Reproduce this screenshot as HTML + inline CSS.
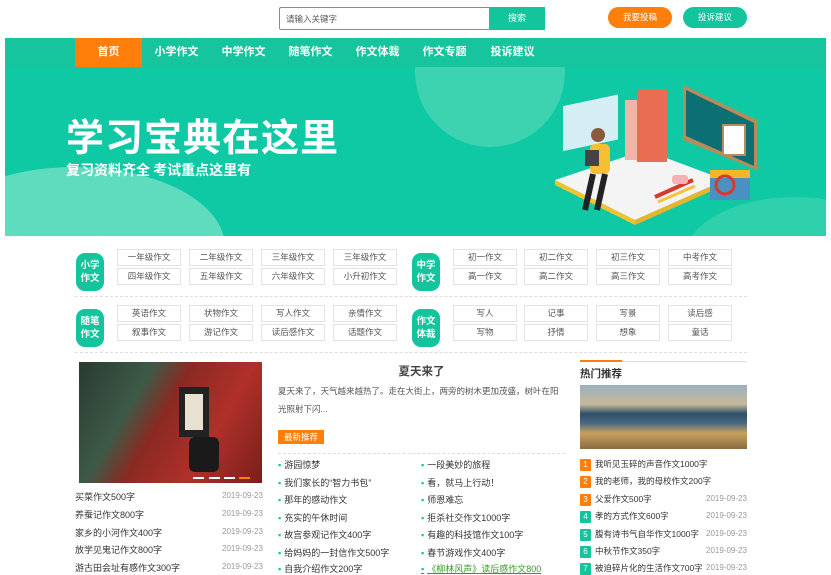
<!DOCTYPE html>
<html><head><meta charset="utf-8"><style>
*{margin:0;padding:0;box-sizing:border-box}
body{width:831px;height:572px;overflow:hidden;background:#fff;font-family:"Liberation Sans","Noto Sans CJK SC",sans-serif;font-size:9px;color:#333;position:relative}
.a{position:absolute}
.nav span{position:absolute;top:0;height:29px;line-height:29px;color:#fff;font-size:11px;font-weight:bold;text-align:center;width:67px}
.cell{position:absolute;width:64px;height:17px;border:1px solid #e3e3e3;text-align:center;line-height:15px;font-size:8.5px;color:#555}
.badge{position:absolute;width:28px;height:38px;border-radius:9px;background:#13c49c;color:#fff;font-weight:bold;font-size:9.5px;text-align:center;line-height:13px;padding-top:6px}
.li{position:absolute;font-size:9px;color:#333;white-space:nowrap}
.r{font-size:8.5px}
.d{position:absolute;font-size:8px;color:#999;background:#fff;padding-left:2px}
.dot{color:#13c49c;margin-right:3px}
.n{display:inline-block;width:11px;height:12px;color:#fff;font-size:8px;text-align:center;line-height:12px;margin-right:4px;border-radius:1px}
</style></head><body>
<div class="a" style="left:279px;top:7px;width:266px;height:23px;border:1px solid #13c49c;border-radius:2px"></div>
<div class="a" style="left:286px;top:13px;font-size:8.5px;color:#555">请输入关键字</div>
<div class="a" style="left:489px;top:7px;width:56px;height:23px;background:#13c49c;color:#fff;text-align:center;line-height:23px;font-size:9px">搜索</div>
<div class="a" style="left:608px;top:7px;width:64px;height:21px;border-radius:11px;background:#ff7f0a;color:#fff;text-align:center;line-height:21px;font-size:8.5px">我要投稿</div>
<div class="a" style="left:683px;top:7px;width:64px;height:21px;border-radius:11px;background:#13c49c;color:#fff;text-align:center;line-height:21px;font-size:8.5px">投诉建议</div>
<div class="a nav" style="left:5px;top:38px;width:821px;height:29px;background:#16c49e">
<span style="left:70px;background:#ff7f0a">首页</span>
<span style="left:138px">小学作文</span><span style="left:205px">中学作文</span><span style="left:272px">随笔作文</span><span style="left:339px">作文体裁</span><span style="left:406px">作文专题</span><span style="left:474px">投诉建议</span>
</div>
<div class="a" style="left:5px;top:67px;width:821px;height:169px;background:#0fc9a5;overflow:hidden">
<div class="a" style="left:410px;top:-70px;width:150px;height:150px;border-radius:50%;background:#3dd3b1"></div>
<div class="a" style="left:-80px;top:100px;width:300px;height:160px;border-radius:50%;background:#5fdcbd"></div>
<div class="a" style="left:680px;top:130px;width:220px;height:120px;border-radius:50%;background:#2fd0ac"></div>
<div class="a" style="left:61px;top:40px;font-size:38px;font-weight:bold;color:#fff;letter-spacing:1px;font-family:'Noto Sans CJK SC',sans-serif">学习宝典在这里</div>
<div class="a" style="left:61px;top:93px;font-size:14px;font-weight:bold;color:#fff;font-family:'Noto Sans CJK SC',sans-serif">复习资料齐全 考试重点这里有</div>
<svg class="a" style="left:540px;top:3px" width="220" height="160" viewBox="0 0 220 160">
<polygon points="10,110 100,80 180,110 90,150" fill="#f4f4f4"/>
<polygon points="10,110 90,150 90,155 10,115" fill="#f2c230"/>
<polygon points="90,150 180,110 180,115 90,155" fill="#e8b52a"/>
<rect x="18" y="40" width="55" height="45" fill="#d5eef5" transform="skewY(-12)"/>
<rect x="80" y="30" width="30" height="60" fill="#f0b5a8"/>
<rect x="92" y="20" width="30" height="72" fill="#e86d52"/>
<polygon points="138,15 212,50 212,100 138,70" fill="#b98a5b"/>
<polygon points="141,20 209,53 209,96 141,66" fill="#0c6f73"/>
<rect x="178" y="55" width="22" height="30" fill="#fff" stroke="#b98a5b" stroke-width="2"/>
<rect x="165" y="105" width="40" height="25" fill="#4a90c0"/><rect x="165" y="100" width="40" height="8" fill="#f7b42c"/>
<circle cx="180" cy="115" r="9" fill="none" stroke="#d63a2e" stroke-width="3"/>
<path d="M110 127 L148 110" stroke="#d63a2e" stroke-width="4"/><path d="M113 132 L150 116" stroke="#f5c33b" stroke-width="3"/>
<rect x="127" y="105" width="16" height="9" rx="3" fill="#f4b2b2"/>
<circle cx="53" cy="65" r="7" fill="#8b5a3c"/>
<rect x="45" y="74" width="20" height="30" rx="5" fill="#f7c032"/>
<path d="M48 104 L40 140 M60 104 L52 140" stroke="#222" stroke-width="6"/>
<rect x="40" y="80" width="14" height="16" fill="#444"/>
</svg>
</div>
<div class="badge" style="left:76px;top:253px">小学<br>作文</div>
<div class="badge" style="left:412px;top:253px">中学<br>作文</div>
<div class="badge" style="left:76px;top:309px">随笔<br>作文</div>
<div class="badge" style="left:412px;top:309px">作文<br>体裁</div>
<div class="cell" style="left:117px;top:249px">一年级作文</div><div class="cell" style="left:189px;top:249px">二年级作文</div><div class="cell" style="left:261px;top:249px">三年级作文</div><div class="cell" style="left:333px;top:249px">三年级作文</div>
<div class="cell" style="left:117px;top:268px">四年级作文</div><div class="cell" style="left:189px;top:268px">五年级作文</div><div class="cell" style="left:261px;top:268px">六年级作文</div><div class="cell" style="left:333px;top:268px">小升初作文</div>
<div class="cell" style="left:453px;top:249px">初一作文</div><div class="cell" style="left:524px;top:249px">初二作文</div><div class="cell" style="left:596px;top:249px">初三作文</div><div class="cell" style="left:668px;top:249px">中考作文</div>
<div class="cell" style="left:453px;top:268px">高一作文</div><div class="cell" style="left:524px;top:268px">高二作文</div><div class="cell" style="left:596px;top:268px">高三作文</div><div class="cell" style="left:668px;top:268px">高考作文</div>
<div class="a" style="left:75px;top:296px;width:672px;border-top:1px dashed #ddd"></div>
<div class="cell" style="left:117px;top:305px">英语作文</div><div class="cell" style="left:189px;top:305px">状物作文</div><div class="cell" style="left:261px;top:305px">写人作文</div><div class="cell" style="left:333px;top:305px">亲情作文</div>
<div class="cell" style="left:117px;top:324px">叙事作文</div><div class="cell" style="left:189px;top:324px">游记作文</div><div class="cell" style="left:261px;top:324px">读后感作文</div><div class="cell" style="left:333px;top:324px">话题作文</div>
<div class="cell" style="left:453px;top:305px">写人</div><div class="cell" style="left:524px;top:305px">记事</div><div class="cell" style="left:596px;top:305px">写景</div><div class="cell" style="left:668px;top:305px">读后感</div>
<div class="cell" style="left:453px;top:324px">写物</div><div class="cell" style="left:524px;top:324px">抒情</div><div class="cell" style="left:596px;top:324px">想象</div><div class="cell" style="left:668px;top:324px">童话</div>
<div class="a" style="left:75px;top:352px;width:672px;border-top:1px dashed #ddd"></div>
<div class="a" style="left:79px;top:362px;width:183px;height:121px;background:linear-gradient(120deg,#2a3a30 0%,#3d5a48 30%,#8a2a22 45%,#b0302a 70%,#7a1e1a 100%);overflow:hidden">
<div class="a" style="left:100px;top:25px;width:30px;height:50px;background:#222"></div>
<div class="a" style="left:106px;top:32px;width:18px;height:36px;background:#e8e0d0"></div>
<div class="a" style="left:110px;top:75px;width:30px;height:35px;background:#1a1a1a;border-radius:6px"></div>
</div>
<div class="a" style="left:193px;top:477px;width:11px;height:2px;background:#fff"></div><div class="a" style="left:209px;top:477px;width:11px;height:2px;background:#fff"></div><div class="a" style="left:224px;top:477px;width:11px;height:2px;background:#fff"></div><div class="a" style="left:239px;top:477px;width:11px;height:2px;background:#ff7f0a"></div>
<div class="li" style="left:75px;top:490px">买菜作文500字</div><div class="d" style="left:220px;top:491px">2019-09-23</div>
<div class="li" style="left:75px;top:508px">养蚕记作文800字</div><div class="d" style="left:220px;top:509px">2019-09-23</div>
<div class="li" style="left:75px;top:526px">家乡的小河作文400字</div><div class="d" style="left:220px;top:527px">2019-09-23</div>
<div class="li" style="left:75px;top:543px">放学见鬼记作文800字</div><div class="d" style="left:220px;top:544px">2019-09-23</div>
<div class="li" style="left:75px;top:561px">游古田会址有感作文300字</div><div class="d" style="left:220px;top:562px">2019-09-23</div>
<div class="a" style="left:278px;top:363px;width:287px;text-align:center;font-size:11.5px;font-weight:bold;color:#444">夏天来了</div>
<div class="a" style="left:278px;top:382px;width:287px;font-size:8.5px;color:#555;line-height:18px">夏天来了，天气越来越热了。走在大街上，两旁的树木更加茂盛，树叶在阳光照射下闪...</div>
<div class="a" style="left:278px;top:430px;width:46px;height:14px;background:#ff7f0a;color:#fff;font-size:8.5px;text-align:center;line-height:14px">最新推荐</div>
<div class="a" style="left:278px;top:453px;width:287px;border-top:1px dashed #ddd"></div>
<div class="li" style="left:278px;top:458px"><span class="dot">▪</span>游园惊梦</div><div class="li" style="left:421px;top:458px"><span class="dot">▪</span>一段美妙的旅程</div>
<div class="li" style="left:278px;top:476px"><span class="dot">▪</span>我们家长的“智力书包”</div><div class="li" style="left:421px;top:476px"><span class="dot">▪</span>看，就马上行动！</div>
<div class="li" style="left:278px;top:493px"><span class="dot">▪</span>那年的感动作文</div><div class="li" style="left:421px;top:493px"><span class="dot">▪</span>师恩难忘</div>
<div class="li" style="left:278px;top:511px"><span class="dot">▪</span>充实的午休时间</div><div class="li" style="left:421px;top:511px"><span class="dot">▪</span>拒杀社交作文1000字</div>
<div class="li" style="left:278px;top:528px"><span class="dot">▪</span>故宫参观记作文400字</div><div class="li" style="left:421px;top:528px"><span class="dot">▪</span>有趣的科技馆作文100字</div>
<div class="li" style="left:278px;top:546px"><span class="dot">▪</span>给妈妈的一封信作文500字</div><div class="li" style="left:421px;top:546px"><span class="dot">▪</span>春节游戏作文400字</div>
<div class="li" style="left:278px;top:562px"><span class="dot">▪</span>自我介绍作文200字</div><div class="li" style="left:421px;top:562px;color:#3a9a2a;text-decoration:underline"><span class="dot">▪</span>《柳林风声》读后感作文800</div>
<div class="a" style="left:580px;top:361px;width:167px;border-top:1px solid #ddd"></div>
<div class="a" style="left:580px;top:360px;width:42px;border-top:2px solid #ff7f0a"></div>
<div class="a" style="left:580px;top:366px;font-size:10.5px;font-weight:bold;color:#333">热门推荐</div>
<div class="a" style="left:580px;top:385px;width:167px;height:64px;background:linear-gradient(180deg,#9ab0c0 0%,#c8b89a 30%,#2e4f6a 45%,#4a6a80 60%,#c9a060 75%,#8a6a40 100%)"></div>
<div class="li r" style="left:580px;top:458px"><span class="n" style="background:#ff7f0a">1</span>我听见玉碎的声音作文1000字</div>
<div class="li r" style="left:580px;top:475px"><span class="n" style="background:#ff7f0a">2</span>我的老师，我的母校作文200字</div>
<div class="li r" style="left:580px;top:493px"><span class="n" style="background:#ff7f0a">3</span>父爱作文500字</div><div class="d" style="left:704px;top:494px">2019-09-23</div>
<div class="li r" style="left:580px;top:510px"><span class="n" style="background:#13c49c">4</span>孝的方式作文600字</div><div class="d" style="left:704px;top:511px">2019-09-23</div>
<div class="li r" style="left:580px;top:528px"><span class="n" style="background:#13c49c">5</span>腹有诗书气自华作文1000字</div><div class="d" style="left:704px;top:529px">2019-09-23</div>
<div class="li r" style="left:580px;top:545px"><span class="n" style="background:#13c49c">6</span>中秋节作文350字</div><div class="d" style="left:704px;top:546px">2019-09-23</div>
<div class="li r" style="left:580px;top:562px"><span class="n" style="background:#13c49c">7</span>被迫碎片化的生活作文700字</div><div class="d" style="left:704px;top:563px">2019-09-23</div>
</body></html>
